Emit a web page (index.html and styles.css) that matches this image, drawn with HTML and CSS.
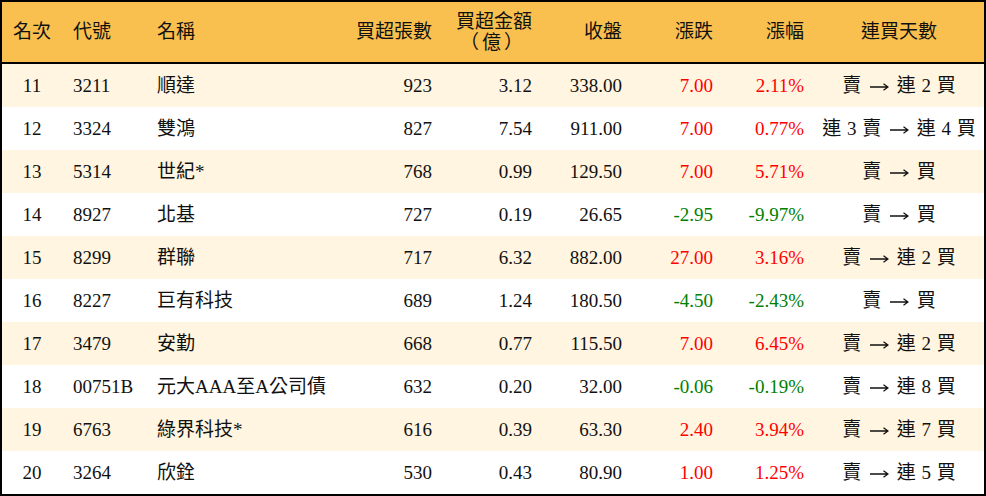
FILE: index.html
```html
<!DOCTYPE html>
<html lang="zh-Hant">
<head>
<meta charset="utf-8">
<link rel="stylesheet" href="styles.css">
</head>
<body>
<div class="board">
  <div class="row head">
    <div class="c c1">名次</div>
    <div class="c c2">代號</div>
    <div class="c c3">名稱</div>
    <div class="c r">買超張數</div>
    <div class="c r two"><span>買超金額</span><span class="sub">（億）</span></div>
    <div class="c r">收盤</div>
    <div class="c r">漲跌</div>
    <div class="c r">漲幅</div>
    <div class="c c9">連買天數</div>
  </div>
  <div class="row alt">
    <div class="c c1">11</div><div class="c c2">3211</div><div class="c c3">順達</div>
    <div class="c r">923</div><div class="c r">3.12</div><div class="c r">338.00</div>
    <div class="c r up">7.00</div><div class="c r up">2.11%</div><div class="c c9">賣 <svg class="arr" viewBox="0 0 20 10"><path d="M1 5H19M14.5 1.8L19 5L14.5 8.2"/></svg> 連 2 買</div>
  </div>
  <div class="row">
    <div class="c c1">12</div><div class="c c2">3324</div><div class="c c3">雙鴻</div>
    <div class="c r">827</div><div class="c r">7.54</div><div class="c r">911.00</div>
    <div class="c r up">7.00</div><div class="c r up">0.77%</div><div class="c c9">連 3 賣 <svg class="arr" viewBox="0 0 20 10"><path d="M1 5H19M14.5 1.8L19 5L14.5 8.2"/></svg> 連 4 買</div>
  </div>
  <div class="row alt">
    <div class="c c1">13</div><div class="c c2">5314</div><div class="c c3">世紀*</div>
    <div class="c r">768</div><div class="c r">0.99</div><div class="c r">129.50</div>
    <div class="c r up">7.00</div><div class="c r up">5.71%</div><div class="c c9">賣 <svg class="arr" viewBox="0 0 20 10"><path d="M1 5H19M14.5 1.8L19 5L14.5 8.2"/></svg> 買</div>
  </div>
  <div class="row">
    <div class="c c1">14</div><div class="c c2">8927</div><div class="c c3">北基</div>
    <div class="c r">727</div><div class="c r">0.19</div><div class="c r">26.65</div>
    <div class="c r dn">-2.95</div><div class="c r dn">-9.97%</div><div class="c c9">賣 <svg class="arr" viewBox="0 0 20 10"><path d="M1 5H19M14.5 1.8L19 5L14.5 8.2"/></svg> 買</div>
  </div>
  <div class="row alt">
    <div class="c c1">15</div><div class="c c2">8299</div><div class="c c3">群聯</div>
    <div class="c r">717</div><div class="c r">6.32</div><div class="c r">882.00</div>
    <div class="c r up">27.00</div><div class="c r up">3.16%</div><div class="c c9">賣 <svg class="arr" viewBox="0 0 20 10"><path d="M1 5H19M14.5 1.8L19 5L14.5 8.2"/></svg> 連 2 買</div>
  </div>
  <div class="row">
    <div class="c c1">16</div><div class="c c2">8227</div><div class="c c3">巨有科技</div>
    <div class="c r">689</div><div class="c r">1.24</div><div class="c r">180.50</div>
    <div class="c r dn">-4.50</div><div class="c r dn">-2.43%</div><div class="c c9">賣 <svg class="arr" viewBox="0 0 20 10"><path d="M1 5H19M14.5 1.8L19 5L14.5 8.2"/></svg> 買</div>
  </div>
  <div class="row alt">
    <div class="c c1">17</div><div class="c c2">3479</div><div class="c c3">安勤</div>
    <div class="c r">668</div><div class="c r">0.77</div><div class="c r">115.50</div>
    <div class="c r up">7.00</div><div class="c r up">6.45%</div><div class="c c9">賣 <svg class="arr" viewBox="0 0 20 10"><path d="M1 5H19M14.5 1.8L19 5L14.5 8.2"/></svg> 連 2 買</div>
  </div>
  <div class="row">
    <div class="c c1">18</div><div class="c c2">00751B</div><div class="c c3">元大AAA至A公司債</div>
    <div class="c r">632</div><div class="c r">0.20</div><div class="c r">32.00</div>
    <div class="c r dn">-0.06</div><div class="c r dn">-0.19%</div><div class="c c9">賣 <svg class="arr" viewBox="0 0 20 10"><path d="M1 5H19M14.5 1.8L19 5L14.5 8.2"/></svg> 連 8 買</div>
  </div>
  <div class="row alt">
    <div class="c c1">19</div><div class="c c2">6763</div><div class="c c3">綠界科技*</div>
    <div class="c r">616</div><div class="c r">0.39</div><div class="c r">63.30</div>
    <div class="c r up">2.40</div><div class="c r up">3.94%</div><div class="c c9">賣 <svg class="arr" viewBox="0 0 20 10"><path d="M1 5H19M14.5 1.8L19 5L14.5 8.2"/></svg> 連 7 買</div>
  </div>
  <div class="row">
    <div class="c c1">20</div><div class="c c2">3264</div><div class="c c3">欣銓</div>
    <div class="c r">530</div><div class="c r">0.43</div><div class="c r">80.90</div>
    <div class="c r up">1.00</div><div class="c r up">1.25%</div><div class="c c9">賣 <svg class="arr" viewBox="0 0 20 10"><path d="M1 5H19M14.5 1.8L19 5L14.5 8.2"/></svg> 連 5 買</div>
  </div>
</div>
</body>
</html>
```
FILE: styles.css
```css
html, body {
  margin: 0;
  padding: 0;
  background: #ffffff;
}
.board {
  width: 986px;
  height: 496px;
  box-sizing: border-box;
  border: 2px solid #000;
  font-family: "Liberation Serif", "Noto Sans CJK TC", serif;
  font-size: 19px;
  color: #111;
  display: flex;
  flex-direction: column;
}
.row {
  display: grid;
  grid-template-columns: 60px 85px 193px 102px 100px 90px 91px 91px 170px;
  height: 43px;
  align-items: center;
  background: #ffffff;
}
.row.alt {
  background: #fff5e0;
}
.row.head {
  height: 60px;
  background: #f9c04f;
  border-bottom: 2px solid #000;
}
.c {
  white-space: nowrap;
  line-height: 20px;
}
.c1 { text-align: center; }
.c2 { padding-left: 11px; }
.c3 { padding-left: 10px; }
.r { text-align: right; padding-right: 10px; }
.c9 { text-align: center; word-spacing: 1px; }
.two {
  display: flex;
  flex-direction: column;
  align-items: flex-end;
}
.two .sub {
  align-self: flex-end;
  padding-right: 6px;
  margin-top: 1px;
  letter-spacing: 3px;
}
.arr {
  width: 20px;
  height: 10px;
  margin: 0 2px;
  vertical-align: middle;
  fill: none;
  stroke: #111;
  stroke-width: 1.3;
}
.up { color: #ff0000; }
.dn { color: #008000; }
```
